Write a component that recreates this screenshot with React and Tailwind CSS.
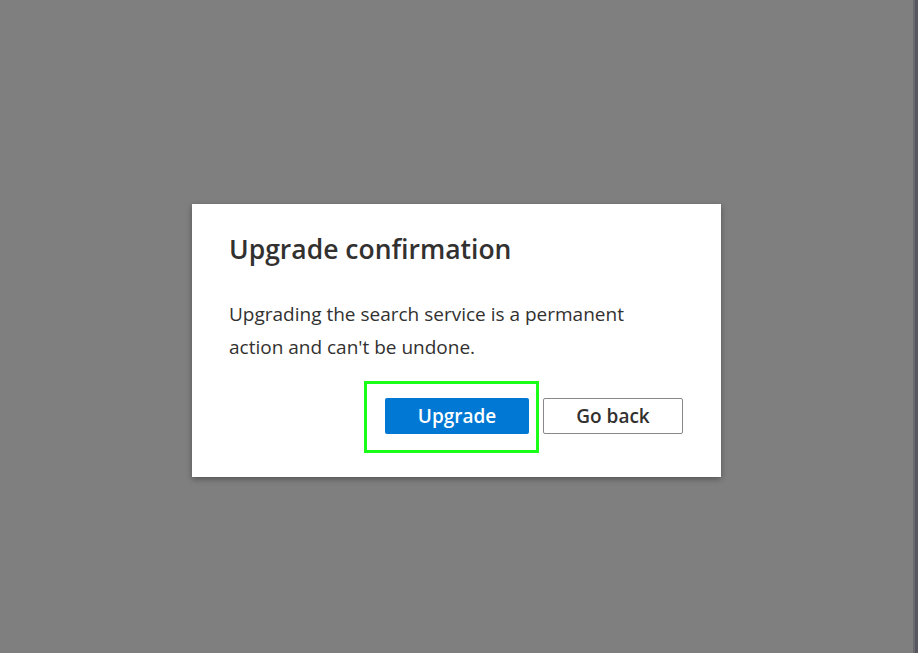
export default function App() {
  return (
    <div className="flex h-[653px] w-full bg-[#7f7f7f] font-['Segoe_UI','Open_Sans',sans-serif]">
      {/* overlay area */}
      <div className="flex flex-1 justify-center pt-[204px]">
        <div className="flex h-[273px] w-[529px] flex-col bg-white px-[37px] pt-[28px] shadow-[0_2px_6px_rgba(0,0,0,0.35)]">
          <h2 className="text-[26.5px] font-semibold leading-[34px] text-[#323130]">Upgrade confirmation</h2>
          <p className="mt-[32px] text-[19px] leading-[33px] text-[#323130]">
            Upgrading the search service is a permanent
            <br />
            action and can't be undone.
          </p>
          <div className="mt-[34px] flex justify-end gap-[14px] pr-[1px]">
            <div className="relative">
              <button className="h-[36px] w-[144px] rounded-[2px] bg-[#0078d4] text-[19px] font-semibold text-white">
                Upgrade
              </button>
              {/* highlight annotation */}
              <div className="pointer-events-none absolute -bottom-[19px] -left-[21px] -right-[10px] -top-[17px] border-[3px] border-[#1aff1a]" />
            </div>
            <button className="h-[36px] w-[140px] rounded-[2px] border border-[#8a8886] bg-white text-[19px] font-semibold text-[#323130]">
              Go back
            </button>
          </div>
        </div>
      </div>
      {/* right edge strip */}
      <div className="flex w-[5px]">
        <div className="w-[2px] bg-[#6a6a6e]" />
        <div className="flex-1 bg-[#575762]" />
      </div>
    </div>
  );
}
